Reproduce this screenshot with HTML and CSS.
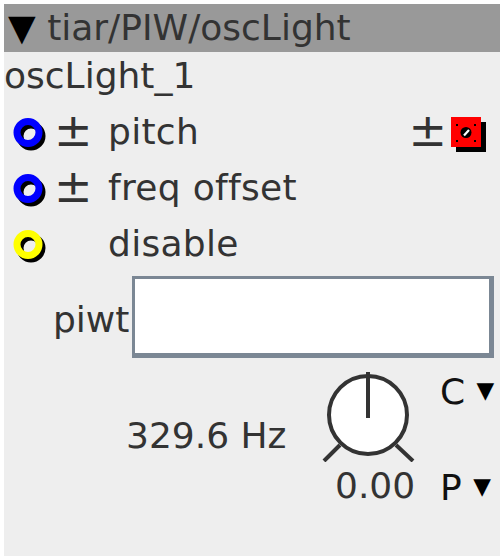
FILE: index.html
```html
<!DOCTYPE html>
<html>
<head>
<meta charset="utf-8">
<link rel="stylesheet" href="styles.css">
</head>
<body>
<div class="panel">
  <div class="header"><span class="tri">▼</span> tiar/PIW/oscLight</div>
  <div class="name">oscLight_1</div>

  <div class="row">
    <span class="port">
      <svg width="40" height="40" viewBox="0 0 40 40"><circle cx="23" cy="24" r="11" fill="none" stroke="#000" stroke-width="7"/><circle cx="20" cy="20.5" r="11" fill="none" stroke="#0000ff" stroke-width="7"/></svg>
    </span>
    <span class="pm">±</span>
    <span class="label">pitch</span>
    <span class="right">
      <span class="pm-r">±</span>
      <svg class="mod" width="40" height="40" viewBox="0 0 40 40">
        <rect x="6" y="10" width="30" height="30" fill="#000"/>
        <rect x="1" y="5" width="30" height="30" fill="#ff0000"/>
        <circle cx="16" cy="20.5" r="5.5" fill="#000"/>
        <path d="M14 23.5 L19 18" stroke="#fff" stroke-width="2.2"/>
        <rect x="6" y="12" width="2" height="2" fill="#000"/>
        <rect x="24" y="12" width="2" height="2" fill="#000"/>
        <rect x="6" y="28" width="2" height="2" fill="#000"/>
        <rect x="24" y="28" width="2" height="2" fill="#000"/>
      </svg>
    </span>
  </div>

  <div class="row">
    <span class="port">
      <svg width="40" height="40" viewBox="0 0 40 40"><circle cx="23" cy="24" r="11" fill="none" stroke="#000" stroke-width="7"/><circle cx="20" cy="20.5" r="11" fill="none" stroke="#0000ff" stroke-width="7"/></svg>
    </span>
    <span class="pm">±</span>
    <span class="label">freq offset</span>
  </div>

  <div class="row">
    <span class="port">
      <svg width="40" height="40" viewBox="0 0 40 40"><circle cx="23" cy="24" r="11" fill="none" stroke="#000" stroke-width="7"/><circle cx="20" cy="20.5" r="11" fill="none" stroke="#ffff00" stroke-width="7"/></svg>
    </span>
    <span class="pm"></span>
    <span class="label">disable</span>
  </div>

  <div class="field">
    <span class="field-label">piwt</span>
    <div class="input"></div>
  </div>

  <div class="bottom">
    <div class="freq">329.6 Hz</div>
    <div class="knob">
      <svg width="100" height="96" viewBox="0 0 100 96">
        <line x1="6" y1="95" x2="22" y2="79" stroke="#333" stroke-width="4"/>
        <line x1="78" y1="79" x2="95" y2="95" stroke="#333" stroke-width="4"/>
        <circle cx="50" cy="49" r="39" fill="#fff" stroke="#333" stroke-width="4"/>
        <line x1="50" y1="6" x2="50" y2="52" stroke="#333" stroke-width="4"/>
      </svg>
      <div class="value">0.00</div>
    </div>
    <div class="selects">
      <div class="sel sel-top">C <span class="dd">▼</span></div>
      <div class="sel">P <span class="dd">▼</span></div>
    </div>
  </div>
</div>
</body>
</html>
```

FILE: styles.css
```css
body {
  margin: 4px;
  font-family: "DejaVu Sans", sans-serif;
}

.panel {
  width: 496px;
  height: 552px;
  background: #eeeeee;
  color: #333333;
  font-size: 36px;
  overflow: hidden;
}

.header {
  height: 48px;
  line-height: 48px;
  background: #999999;
  padding-left: 4px;
  white-space: nowrap;
}

.tri {
  color: #000;
}

.name {
  height: 52px;
  line-height: 48px;
}

.row {
  display: flex;
  align-items: center;
  height: 56px;
  line-height: 56px;
  white-space: nowrap;
}

.port {
  width: 50px;
  padding-left: 4px;
  box-sizing: border-box;
  display: flex;
  align-items: center;
}

.port svg,
.mod {
  display: block;
}

.pm {
  width: 54px;
  font-size: 46px;
  line-height: 56px;
  position: relative;
  top: -2px;
}

.pm-r {
  font-size: 46px;
  line-height: 56px;
  position: relative;
  top: -2px;
}

.label {
  letter-spacing: 0.3px;
}

.right {
  margin-left: auto;
  display: flex;
  align-items: center;
  gap: 3px;
  padding-right: 10px;
}

.field {
  display: flex;
  margin-top: 4px;
  padding-left: 49px;
  height: 82px;
}

.field-label {
  line-height: 48px;
  margin-top: 20px;
  margin-right: 3px;
}

.input {
  width: 362px;
  height: 82px;
  box-sizing: border-box;
  background: #ffffff;
  border-style: solid;
  border-color: #7b8794;
  border-width: 3px 5px 5px 3px;
}

.bottom {
  display: flex;
  padding-top: 8px;
}

.freq {
  width: 314px;
  box-sizing: border-box;
  padding-left: 122px;
  margin-top: 46px;
  line-height: 48px;
  height: 48px;
}

.knob {
  width: 100px;
}

.knob svg {
  display: block;
}

.value {
  line-height: 48px;
  padding-left: 17px;
}

.selects {
  margin-left: 22px;
  color: #111;
}

.sel {
  line-height: 48px;
  height: 48px;
  white-space: nowrap;
}

.sel-top {
  height: 96px;
}

.dd {
  font-size: 23px;
  vertical-align: 6px;
  color: #000;
}
```
